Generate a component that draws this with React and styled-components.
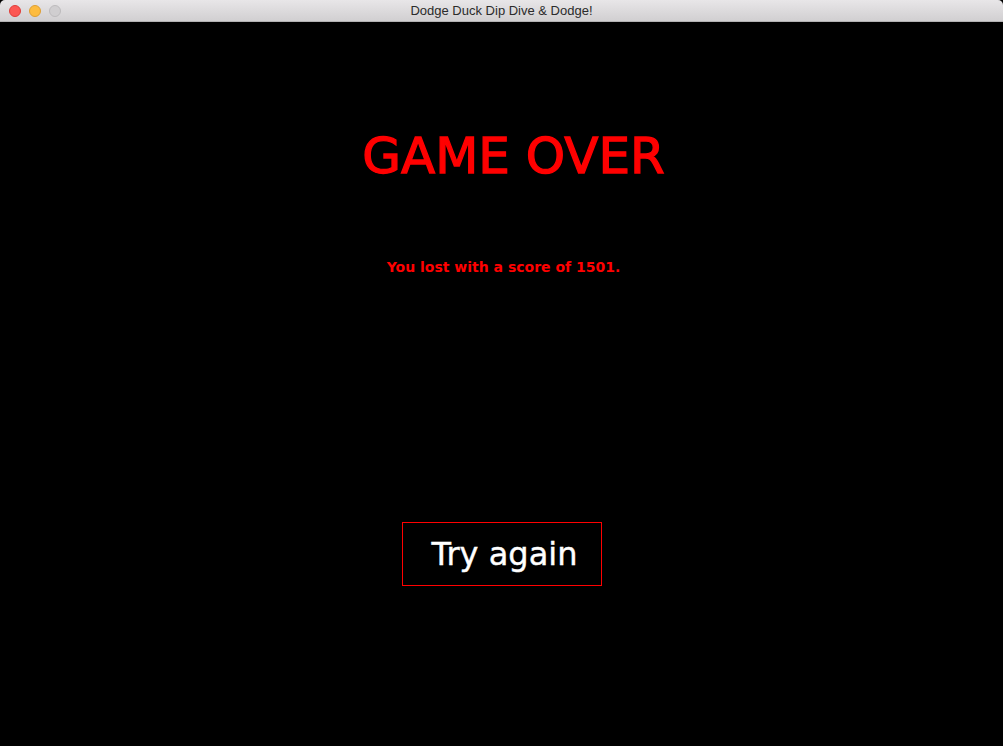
import React from 'react';
import styled, { createGlobalStyle } from 'styled-components';

const GlobalStyle = createGlobalStyle`
  html, body {
    margin: 0;
    padding: 0;
    background: #000;
  }
  body {
    font-family: "DejaVu Sans", "Liberation Sans", sans-serif;
  }
`;

const Window = styled.div`
  width: 1003px;
  height: 746px;
  display: flex;
  flex-direction: column;
  overflow: hidden;
`;

const TitleBar = styled.div`
  height: 22px;
  flex-shrink: 0;
  position: relative;
  display: flex;
  align-items: center;
  justify-content: center;
  background: linear-gradient(#e8e6e8, #d1cfd1);
  border-bottom: 1px solid #b3b1b3;
  box-sizing: border-box;
  border-radius: 5px 5px 0 0;
`;

const Lights = styled.div`
  position: absolute;
  left: 9px;
  top: 5px;
  display: flex;
  gap: 8px;
`;

const Light = styled.span`
  width: 12px;
  height: 12px;
  border-radius: 50%;
  background: ${p => p.color};
  box-sizing: border-box;
  border: 1px solid ${p => p.edge};
`;

const Title = styled.div`
  font-family: "Liberation Sans", Arial, sans-serif;
  font-size: 13px;
  color: #2b2b2b;
`;

const Screen = styled.div`
  flex: 1;
  background: #000;
  display: flex;
  flex-direction: column;
  align-items: center;
`;

const Heading = styled.h1`
  margin: 102px 0 0 24px;
  font-size: 50px;
  font-weight: normal;
  line-height: 64px;
  color: #ff0000;
  -webkit-text-stroke: 1.3px #ff0000;
`;

const Score = styled.p`
  margin: 71px 0 0 4px;
  font-size: 14px;
  font-weight: bold;
  line-height: 16px;
  color: #ff0000;
`;

const Button = styled.button`
  margin-top: 247px;
  width: 200px;
  height: 64px;
  background: #000;
  border: 1px solid #ff0000;
  color: #fff;
  font-family: "DejaVu Sans", sans-serif;
  font-size: 32px;
  padding: 0 0 0 6px;
  cursor: pointer;
  -webkit-text-stroke: 0.4px #fff;
`;

export default function App() {
  return (
    <Window>
      <GlobalStyle />
      <TitleBar>
        <Lights>
          <Light color="#fc5753" edge="#df3d39" />
          <Light color="#fdbc40" edge="#de9f34" />
          <Light color="#d0ced0" edge="#bdbbbd" />
        </Lights>
        <Title>Dodge Duck Dip Dive &amp; Dodge!</Title>
      </TitleBar>
      <Screen>
        <Heading>GAME OVER</Heading>
        <Score>You lost with a score of 1501.</Score>
        <Button>Try again</Button>
      </Screen>
    </Window>
  );
}
